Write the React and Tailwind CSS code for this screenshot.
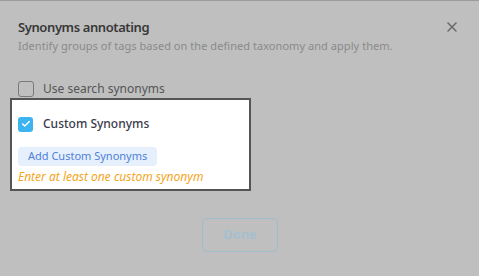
import { Check, X } from "lucide-react"

const font = { fontFamily: "'Noto Sans', 'DejaVu Sans', sans-serif" }

const App = () => {
  return (
    <div className="w-[479px] h-[276px] bg-[#bfbfbf] border-t border-[#9c9c9c] overflow-hidden flex flex-col" style={font}>
      <div className="flex items-start justify-between pl-[18px] pr-[19px] pt-[15px]">
        <h2 className="text-[13px] leading-[22px] font-semibold text-[#383838] tracking-[-0.4px]">Synonyms annotating</h2>
        <X className="size-[16px] mt-[3px] text-[#666666]" strokeWidth={2.2} />
      </div>
      <p className="pl-[18px] text-[11px] leading-[16px] text-[#8a8a8a] tracking-[0.05px]">
        Identify groups of tags based on the defined taxonomy and apply them.
      </p>

      <div className="flex items-center gap-[9px] pl-[18px] mt-[26px] h-[17px]">
        <span className="size-[16px] rounded-[3px] border border-[#7a7a7a]" />
        <span className="text-[12px] text-[#555555]">Use search synonyms</span>
      </div>

      <div className="ml-[10px] mt-[1px] w-[241px] h-[93px] bg-white border-2 border-[#555555] px-[6px] pt-[15px]">
        <div className="flex items-center gap-[10px]">
          <span className="size-[15px] rounded-[3px] bg-[#3cb4f0] flex items-center justify-center">
            <Check className="size-[10px] text-white" strokeWidth={3.5} />
          </span>
          <span className="text-[12px] font-medium text-[#3a3a4a]">Custom Synonyms</span>
        </div>
        <div className="mt-[14px] inline-flex items-center h-[19px] px-[10px] rounded-[4px] bg-[#e6effc] text-[11px] text-[#4f82d9]">
          Add Custom Synonyms
        </div>
        <p className="mt-[3px] text-[12px] leading-[16px] italic text-[#f2a61d]">Enter at least one custom synonym</p>
      </div>

      <div className="flex justify-center mt-[27px]">
        <button className="w-[76px] h-[34px] rounded-[5px] border border-[#9fbccb] text-[13px] font-semibold text-[#a2bfcf] ml-[1px]">
          Done
        </button>
      </div>
    </div>
  )
}

export default App
